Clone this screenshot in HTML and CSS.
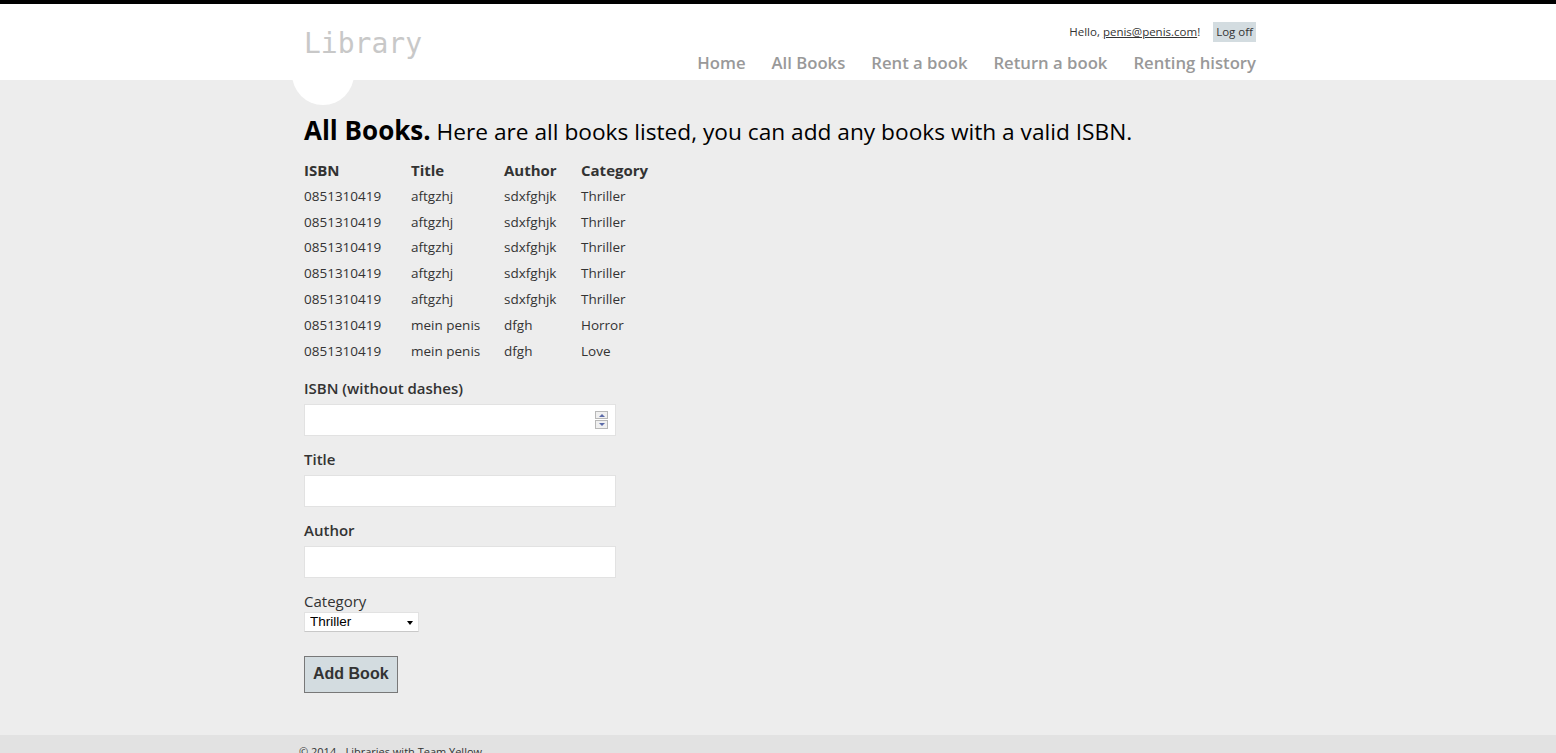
FILE: index.html
```html
<!DOCTYPE html>
<html lang="en">
<head>
<meta charset="utf-8">
<title>All Books - Library</title>
<link rel="stylesheet" href="styles.css">
</head>
<body>
<header class="site-header">
  <div class="wrapper header-row">
    <p class="site-title">Library</p>
    <div class="header-right">
      <div class="login">Hello, <a class="username" href="#">penis@penis.com</a>! <a class="logoff" href="#">Log off</a></div>
      <nav>
        <ul class="menu">
          <li><a href="#">Home</a></li>
          <li><a href="#">All Books</a></li>
          <li><a href="#">Rent a book</a></li>
          <li><a href="#">Return a book</a></li>
          <li><a href="#">Renting history</a></li>
        </ul>
      </nav>
    </div>
  </div>
</header>
<div class="page-body">
  <div class="wrapper main-content">
    <span class="accent"></span>
    <h1 class="title"><strong>All Books.</strong> Here are all books listed, you can add any books with a valid ISBN.</h1>
    <table class="books">
      <thead>
        <tr><th class="c1">ISBN</th><th class="c2">Title</th><th class="c3">Author</th><th>Category</th></tr>
      </thead>
      <tbody>
        <tr><td>0851310419</td><td>aftgzhj</td><td>sdxfghjk</td><td>Thriller</td></tr>
        <tr><td>0851310419</td><td>aftgzhj</td><td>sdxfghjk</td><td>Thriller</td></tr>
        <tr><td>0851310419</td><td>aftgzhj</td><td>sdxfghjk</td><td>Thriller</td></tr>
        <tr><td>0851310419</td><td>aftgzhj</td><td>sdxfghjk</td><td>Thriller</td></tr>
        <tr><td>0851310419</td><td>aftgzhj</td><td>sdxfghjk</td><td>Thriller</td></tr>
        <tr><td>0851310419</td><td>mein penis</td><td>dfgh</td><td>Horror</td></tr>
        <tr><td>0851310419</td><td>mein penis</td><td>dfgh</td><td>Love</td></tr>
      </tbody>
    </table>
    <form class="book-form">
      <div class="field">
        <label class="label" for="isbn">ISBN (without dashes)</label>
        <span class="num-wrap">
          <input class="text-input" id="isbn" type="text">
          <span class="spinner">
            <span class="spin up"></span>
            <span class="spin down"></span>
          </span>
        </span>
      </div>
      <div class="field">
        <label class="label" for="title">Title</label>
        <input class="text-input" id="title" type="text">
      </div>
      <div class="field">
        <label class="label" for="author">Author</label>
        <input class="text-input" id="author" type="text">
      </div>
      <div class="field">
        <span class="label plain">Category</span>
        <span class="select-wrap">
          <select class="select">
            <option>Thriller</option>
            <option>Horror</option>
            <option>Love</option>
          </select>
        </span>
      </div>
      <button class="submit" type="button">Add Book</button>
    </form>
  </div>
</div>
<footer class="site-footer">
  <div class="wrapper footer-inner">&copy; 2014 - Libraries with Team Yellow</div>
</footer>
</body>
</html>
```

FILE: styles.css
```css
html {
  margin: 0;
  padding: 0;
  background: #e2e2e2;
}
body {
  margin: 0;
  padding: 0;
  border-top: 4px solid #000;
  background: #fff;
  color: #333;
  font-family: "Segoe UI", "Open Sans", sans-serif;
  font-size: 13.5px;
}
.wrapper {
  width: 960px;
  margin: 0 auto;
}
.site-header {
  position: relative;
  z-index: 2;
  height: 76px;
  background: #fff;
}
.header-row {
  display: flex;
  justify-content: space-between;
  align-items: flex-start;
}
.site-title {
  margin: 0;
  padding: 23px 0 0 6px;
  font-family: "DejaVu Sans Mono", "Liberation Mono", monospace;
  font-size: 28px;
  line-height: 34px;
  color: #c8c8c8;
}
.header-right {
  display: flex;
  flex-direction: column;
  align-items: flex-end;
  padding-top: 18px;
  padding-right: 2px;
}
.login {
  font-size: 11.5px;
  line-height: 20px;
  height: 20px;
  color: #333;
}
.login .username {
  color: #333;
  text-decoration: underline;
}
.login .logoff {
  display: inline-block;
  background: #d3dce0;
  color: #333;
  text-decoration: none;
  margin-left: 10px;
  padding: 0 3px;
  line-height: 20px;
}
.menu {
  margin: 0;
  padding: 0;
  list-style: none;
  display: flex;
  gap: 26px;
  font-size: 16.7px;
  font-weight: 600;
  line-height: 22px;
  margin-top: 10px;
}
.menu a {
  color: #999;
  text-decoration: none;
}
.page-body {
  background: #ededed;
  padding-bottom: 42px;
}
.main-content {
  position: relative;
  padding: 35px 0 0 6px;
  box-sizing: border-box;
}
.accent {
  position: absolute;
  left: -6px;
  top: -37px;
  width: 62px;
  height: 62px;
  border-radius: 50%;
  background: #fff;
}
.title {
  position: relative;
  margin: 0;
  font-size: 22.7px;
  font-weight: 400;
  line-height: 30px;
  height: 30px;
  color: #000;
}
.title strong {
  font-size: 26px;
  font-weight: 700;
  line-height: 30px;
}
.books {
  border-collapse: collapse;
  margin-top: 12px;
  font-size: 13.5px;
}
.books th {
  text-align: left;
  font-size: 15px;
  font-weight: 700;
  line-height: 22px;
  padding: 0;
  height: 26px;
  vertical-align: middle;
}
.books td {
  padding: 0;
  height: 25.8px;
  vertical-align: middle;
}
.books .c1 { width: 107px; }
.books .c2 { width: 93px; }
.books .c3 { width: 77px; }
.book-form {
  margin-top: 13px;
  display: flex;
  flex-direction: column;
  align-items: flex-start;
}
.field {
  display: flex;
  flex-direction: column;
  align-items: flex-start;
  margin-bottom: 6px;
}
.label {
  display: block;
  font-size: 15px;
  font-weight: 600;
  line-height: 22px;
}
.label.plain {
  font-weight: 400;
}
.num-wrap {
  position: relative;
  display: block;
}
.text-input {
  display: block;
  box-sizing: border-box;
  width: 312px;
  height: 32px;
  margin: 5px 0 6px 0;
  padding: 5px;
  border: 1px solid #e2e2e2;
  background: #fff;
  font-family: inherit;
  font-size: 15px;
  color: #333;
  outline: none;
}
.spinner {
  position: absolute;
  right: 8px;
  top: 12px;
  width: 13px;
  height: 18px;
  display: flex;
  flex-direction: column;
  gap: 1px;
}
.spin {
  position: relative;
  flex: 1;
  background: #f0f0f0;
  border: 1px solid #b8b8b8;
}
.spin::after {
  content: "";
  position: absolute;
  left: 3px;
  width: 0;
  height: 0;
  border-left: 3px solid transparent;
  border-right: 3px solid transparent;
}
.spin.up::after {
  top: 2px;
  border-bottom: 3px solid #5b6aa8;
}
.spin.down::after {
  top: 2px;
  border-top: 3px solid #5b6aa8;
}
.select-wrap {
  position: relative;
  display: block;
  width: 115px;
  height: 20px;
}
.select-wrap::after {
  content: "";
  position: absolute;
  right: 6px;
  top: 9px;
  border-left: 3.5px solid transparent;
  border-right: 3.5px solid transparent;
  border-top: 4px solid #000;
  pointer-events: none;
}
.select {
  appearance: none;
  -webkit-appearance: none;
  box-sizing: border-box;
  width: 115px;
  height: 20px;
  margin: 0;
  padding: 0 0 0 5px;
  border: 1px solid #e2e2e2;
  border-bottom-color: #c8c8c8;
  border-radius: 0;
  background: #fff;
  font-family: "Liberation Sans", Arial, sans-serif;
  font-size: 13.5px;
  color: #000;
}
.submit {
  margin-top: 18px;
  box-sizing: border-box;
  height: 37px;
  padding: 0 8px;
  border: 1px solid #787878;
  background: #d3dce0;
  color: #333;
  font-family: "Liberation Sans", Arial, sans-serif;
  font-size: 16px;
  font-weight: 700;
  cursor: pointer;
}
.site-footer {
  background: #e2e2e2;
  height: 100px;
}
.footer-inner {
  padding: 9px 0 0 2px;
  font-size: 11px;
  color: #333;
}
```
